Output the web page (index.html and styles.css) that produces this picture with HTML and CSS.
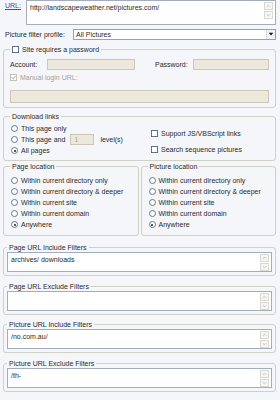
FILE: index.html
```html
<!DOCTYPE html>
<html lang="en">
<head>
    <meta charset="UTF-8">
    <title>Project Options</title>
    <link rel="stylesheet" href="styles.css">
</head>
<body>
<div class="dialog">

    <div class="url-row">
        <a class="url-label" href="#">URL:</a>
        <div class="textbox url-box">
            <div class="text">http://landscapeweather.net/pictures.com/</div>
            <div class="scrollbar">
                <span class="sb-btn"><svg viewBox="0 0 7 7"><path d="M1.5 4.5 L3.5 2.5 L5.5 4.5"/></svg></span>
                <span class="sb-btn"><svg viewBox="0 0 7 7"><path d="M1.5 2.5 L3.5 4.5 L5.5 2.5"/></svg></span>
            </div>
        </div>
    </div>

    <div class="profile-row">
        <span class="profile-label">Picture filter profile:</span>
        <div class="select">
            <span class="select-text">All Pictures</span>
            <span class="select-btn"><svg viewBox="0 0 7 7"><path d="M1.5 2.5 H5.5 L3.5 4.8 Z"/></svg></span>
        </div>
    </div>

    <fieldset class="group">
        <legend><span class="check"></span>Site requires a password</legend>
        <div class="account-row">
            <span class="acc-label">Account:</span>
            <span class="field disabled acc-field"></span>
            <span class="pass-label">Password:</span>
            <span class="field disabled pass-field"></span>
        </div>
        <div class="option dim"><span class="check checked dim"></span>Manual login URL:</div>
        <div class="field disabled login-field"></div>
    </fieldset>

    <fieldset class="group links-group">
        <legend>Download links</legend>
        <div class="links">
            <div class="link-radios">
                <div class="option"><span class="radio"></span>This page only</div>
                <div class="option"><span class="radio"></span>This page and <span class="field disabled level-field">1</span> <span class="level-text">level(s)</span></div>
                <div class="option"><span class="radio on"></span>All pages</div>
            </div>
            <div class="link-checks">
                <div class="option"><span class="check"></span>Support JS/VBScript links</div>
                <div class="option"><span class="check"></span>Search sequence pictures</div>
            </div>
        </div>
    </fieldset>

    <div class="locations">
        <fieldset class="group loc">
            <legend>Page location</legend>
            <div class="option"><span class="radio"></span>Within current directory only</div>
            <div class="option"><span class="radio"></span>Within current directory &amp; deeper</div>
            <div class="option"><span class="radio"></span>Within current site</div>
            <div class="option"><span class="radio"></span>Within current domain</div>
            <div class="option"><span class="radio on"></span>Anywhere</div>
        </fieldset>
        <fieldset class="group loc">
            <legend>Picture location</legend>
            <div class="option"><span class="radio"></span>Within current directory only</div>
            <div class="option"><span class="radio"></span>Within current directory &amp; deeper</div>
            <div class="option"><span class="radio"></span>Within current site</div>
            <div class="option"><span class="radio"></span>Within current domain</div>
            <div class="option"><span class="radio on"></span>Anywhere</div>
        </fieldset>
    </div>

    <fieldset class="group filter first-filter">
        <legend>Page URL Include Filters</legend>
        <div class="textbox filter-box">
            <div class="text">archives/ downloads</div>
            <div class="scrollbar">
                <span class="sb-btn"><svg viewBox="0 0 7 7"><path d="M1.5 4.5 L3.5 2.5 L5.5 4.5"/></svg></span>
                <span class="sb-btn"><svg viewBox="0 0 7 7"><path d="M1.5 2.5 L3.5 4.5 L5.5 2.5"/></svg></span>
            </div>
        </div>
    </fieldset>

    <fieldset class="group filter">
        <legend>Page URL Exclude Filters</legend>
        <div class="textbox filter-box">
            <div class="text"></div>
            <div class="scrollbar">
                <span class="sb-btn"><svg viewBox="0 0 7 7"><path d="M1.5 4.5 L3.5 2.5 L5.5 4.5"/></svg></span>
                <span class="sb-btn"><svg viewBox="0 0 7 7"><path d="M1.5 2.5 L3.5 4.5 L5.5 2.5"/></svg></span>
            </div>
        </div>
    </fieldset>

    <fieldset class="group filter">
        <legend>Picture URL Include Filters</legend>
        <div class="textbox filter-box">
            <div class="text">/no.com.au/</div>
            <div class="scrollbar">
                <span class="sb-btn"><svg viewBox="0 0 7 7"><path d="M1.5 4.5 L3.5 2.5 L5.5 4.5"/></svg></span>
                <span class="sb-btn"><svg viewBox="0 0 7 7"><path d="M1.5 2.5 L3.5 4.5 L5.5 2.5"/></svg></span>
            </div>
        </div>
    </fieldset>

    <fieldset class="group filter">
        <legend>Picture URL Exclude Filters</legend>
        <div class="textbox filter-box">
            <div class="text">/th-</div>
            <div class="scrollbar">
                <span class="sb-btn"><svg viewBox="0 0 7 7"><path d="M1.5 4.5 L3.5 2.5 L5.5 4.5"/></svg></span>
                <span class="sb-btn"><svg viewBox="0 0 7 7"><path d="M1.5 2.5 L3.5 4.5 L5.5 2.5"/></svg></span>
            </div>
        </div>
    </fieldset>

</div>
</body>
</html>
```

FILE: styles.css
```css
body {
    margin: 0;
    background: #f5f6fa;
    font-family: "Liberation Sans", Arial, sans-serif;
    font-size: 7px;
    color: #2a2a2a;
}
.dialog {
    width: 280px;
    height: 400px;
    overflow: hidden;
}

/* text boxes with a little scrollbar */
.textbox {
    display: flex;
    box-sizing: border-box;
    border: 1px solid #a3adbb;
    background: #fff;
}
.textbox .text {
    flex: 1;
    padding: 2px 3px;
    line-height: 9px;
    white-space: nowrap;
    overflow: hidden;
}
.scrollbar {
    width: 10px;
    display: flex;
    flex-direction: column;
    gap: 1px;
    padding: 1px 1px 0 0;
}
.sb-btn {
    display: block;
    width: 9px;
    height: 8px;
    box-sizing: border-box;
    border: 1px solid #d9d9d1;
    background: #f6f6f2;
}
.sb-btn svg {
    display: block;
    width: 7px;
    height: 6px;
    fill: none;
    stroke: #b9bab2;
    stroke-width: 1;
}

.url-row {
    display: flex;
    height: 25px;
    padding: 0 4px 0 5px;
}
.url-label {
    width: 21px;
    padding-top: 2px;
    color: #2d4fbf;
    text-decoration: underline;
}
.url-box {
    flex: 1;
}

.profile-row {
    display: flex;
    align-items: center;
    margin-top: 4px;
    padding: 0 4px 0 5px;
}
.profile-label {
    width: 68px;
}
.select {
    flex: 1;
    height: 11px;
    display: flex;
    box-sizing: border-box;
    border: 1px solid #8fa3bb;
    background: #fff;
}
.select-text {
    flex: 1;
    line-height: 9px;
    padding-left: 2px;
}
.select-btn {
    width: 9px;
    height: 9px;
    box-sizing: border-box;
    border-left: 1px solid #d4d6dc;
    background: #f1f2f5;
}
.select-btn svg {
    display: block;
    width: 8px;
    height: 8px;
    fill: #111;
}

/* group boxes */
.group {
    margin: 5px 4px 0 3px;
    padding: 0 6px 4px 6px;
    border: 1px solid #d0d0c4;
    border-radius: 3px;
    min-width: 0;
}
.group legend {
    display: flex;
    align-items: center;
    gap: 3px;
    margin-left: 0;
    padding: 0 2px;
    line-height: 9px;
}

.option {
    display: flex;
    align-items: center;
    gap: 3px;
    height: 11px;
    white-space: nowrap;
}
.dim {
    color: #a3a294;
}

.check {
    display: inline-block;
    width: 7px;
    height: 7px;
    box-sizing: border-box;
    border: 1px solid #5f728a;
    background: #fff;
}
.check.checked.dim {
    border-color: #c3c2b4;
    position: relative;
}
.check.checked.dim::after {
    content: "";
    position: absolute;
    left: 1px;
    top: 0;
    width: 2px;
    height: 3px;
    border: solid #bdbcad;
    border-width: 0 1px 1px 0;
    transform: rotate(40deg);
}

.radio {
    display: inline-block;
    width: 7px;
    height: 7px;
    margin-left: 1px;
    box-sizing: border-box;
    border: 1px solid #6a7b90;
    border-radius: 50%;
    background: #fff;
    position: relative;
}
.radio.on::after {
    content: "";
    position: absolute;
    left: 1.5px;
    top: 1.5px;
    width: 2px;
    height: 2px;
    border-radius: 50%;
    background: #222;
}

.field {
    display: block;
    box-sizing: border-box;
    height: 11px;
    border: 1px solid #a3adbb;
    background: #fff;
}
.field.disabled {
    border-color: #cbc8b8;
    background: #ece9dc;
}

.account-row {
    display: flex;
    align-items: center;
    margin-top: 5px;
    margin-bottom: 2px;
}
.acc-label {
    width: 37px;
}
.acc-field {
    width: 88px;
}
.pass-label {
    width: 38px;
    margin-left: 20px;
}
.pass-field {
    flex: 1;
}
.login-field {
    height: 13px;
    margin-top: 7px;
}

.links-group {
    margin-top: 4px;
}
.links {
    display: grid;
    grid-template-columns: 141px 1fr;
    padding-top: 2px;
}
.level-field {
    width: 24px;
    line-height: 9px;
    padding-left: 3px;
    color: #a3a294;
    margin-left: 2px;
}
.level-text {
    margin-left: 3px;
}
.link-checks {
    display: flex;
    flex-direction: column;
    gap: 5px;
    padding-top: 5px;
}

.locations {
    display: flex;
    gap: 2px;
    margin: 1px 4px 0 3px;
}
.locations .group {
    flex: 1;
    margin: 0;
    padding: 4px 5px 5px 6px;
}

.group.filter {
    margin-top: 5.5px;
    padding: 0 3px 3px 3px;
}
.group.first-filter {
    margin-top: 7px;
}
.filter-box {
    height: 20px;
}
```
